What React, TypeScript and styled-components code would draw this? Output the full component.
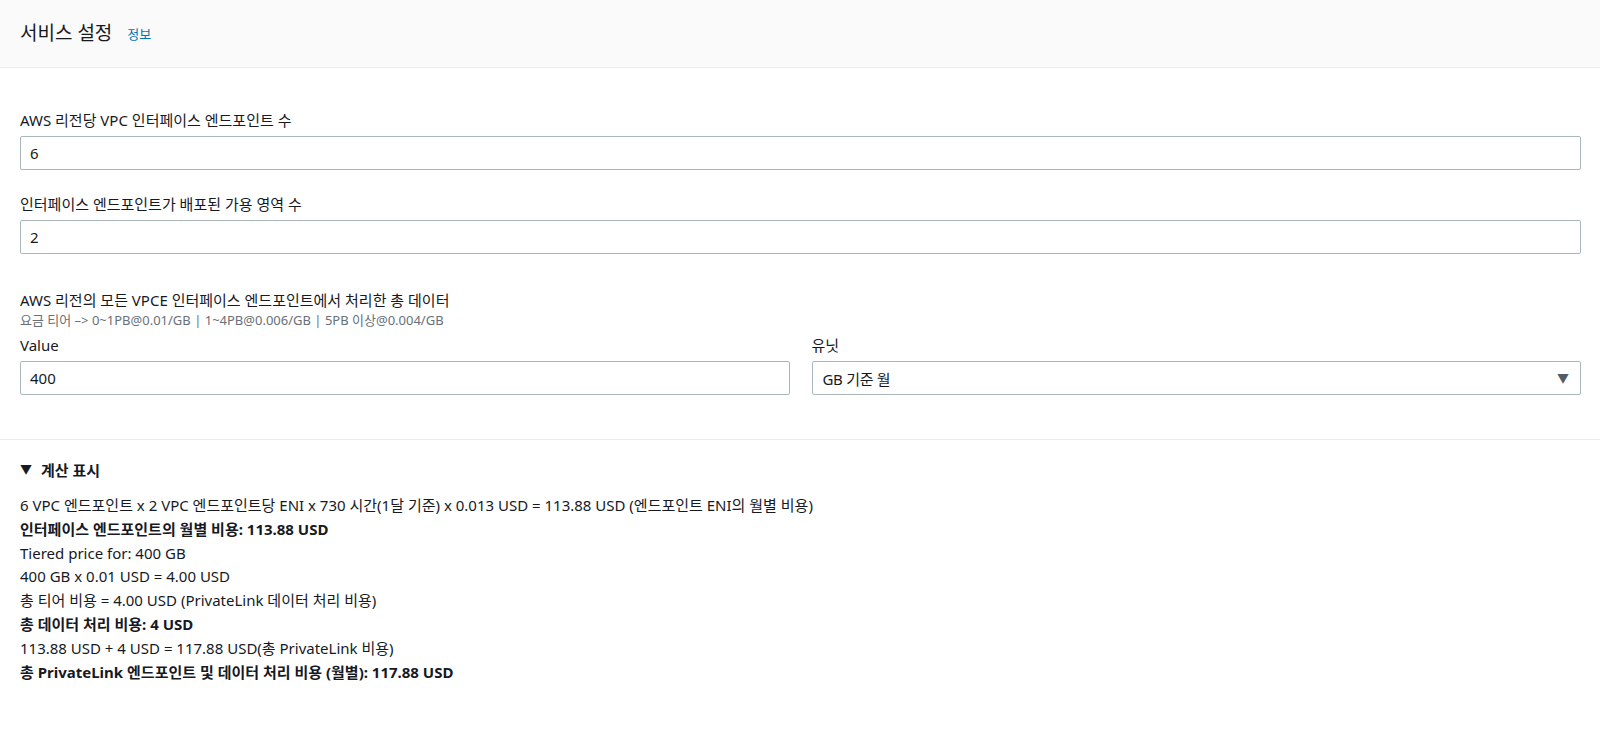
import React from 'react'
import styled, { createGlobalStyle } from 'styled-components'

const GlobalStyle = createGlobalStyle`
  html, body {
    margin: 0;
    padding: 0;
    background: #fff;
  }
  body {
    font-family: "Noto Sans", "Noto Sans CJK KR", sans-serif;
    color: #16191f;
    font-size: 15px;
  }
`

export default function App() {
  return (
    <Page>
      <GlobalStyle />
      <Header>
        <Title>서비스 설정</Title>
        <InfoLink href='#'>정보</InfoLink>
      </Header>
      <Body>
        <Field>
          <Label>AWS 리전당 VPC 인터페이스 엔드포인트 수</Label>
          <Input defaultValue='6' />
        </Field>
        <Field>
          <Label>인터페이스 엔드포인트가 배포된 가용 영역 수</Label>
          <Input defaultValue='2' />
        </Field>
        <Group>
          <Label>AWS 리전의 모든 VPCE 인터페이스 엔드포인트에서 처리한 총 데이터</Label>
          <Hint>요금 티어 –&gt; 0~1PB@0.01/GB | 1~4PB@0.006/GB | 5PB 이상@0.004/GB</Hint>
          <Columns>
            <Field>
              <Label>Value</Label>
              <Input defaultValue='400' />
            </Field>
            <Field>
              <Label>유닛</Label>
              <Select>
                <SelectText>GB 기준 월</SelectText>
                <Caret>▼</Caret>
              </Select>
            </Field>
          </Columns>
        </Group>
      </Body>
      <Calc>
        <Toggle>
          <Caret>▼</Caret>계산 표시
        </Toggle>
        <Lines>
          <Line>6 VPC 엔드포인트 x 2 VPC 엔드포인트당 ENI x 730 시간(1달 기준) x 0.013 USD = 113.88 USD (엔드포인트 ENI의 월별 비용)</Line>
          <Line $bold>인터페이스 엔드포인트의 월별 비용: 113.88 USD</Line>
          <Line>Tiered price for: 400 GB</Line>
          <Line>400 GB x 0.01 USD = 4.00 USD</Line>
          <Line>총 티어 비용 = 4.00 USD (PrivateLink 데이터 처리 비용)</Line>
          <Line $bold>총 데이터 처리 비용: 4 USD</Line>
          <Line>113.88 USD + 4 USD = 117.88 USD(총 PrivateLink 비용)</Line>
          <Line $bold>총 PrivateLink 엔드포인트 및 데이터 처리 비용 (월별): 117.88 USD</Line>
        </Lines>
      </Calc>
    </Page>
  )
}

const Page = styled.div`
  width: 100%;
  min-height: 729px;
  background: #fff;
`

const Header = styled.div`
  height: 68px;
  background: #fafafa;
  border-bottom: 1px solid #eaeded;
  display: flex;
  align-items: center;
  gap: 15px;
  padding: 0 20px 3px;
  box-sizing: border-box;
`

const Title = styled.h2`
  margin: 0;
  font-size: 19px;
  font-weight: 400;
  color: #16191f;
`

const InfoLink = styled.a`
  font-size: 13px;
  color: #0073bb;
  text-decoration: none;
  margin-top: 2px;
`

const Body = styled.div`
  padding: 41px 19px 44px 20px;
  display: flex;
  flex-direction: column;
  gap: 23px;
  border-bottom: 1px solid #eaeded;
`

const Field = styled.div`
  display: flex;
  flex-direction: column;
  gap: 5px;
  min-width: 0;
`

const Group = styled.div`
  display: flex;
  flex-direction: column;
  margin-top: 12px;
`

const Label = styled.div`
  font-size: 15px;
  line-height: 22px;
  color: #16191f;
`

const Hint = styled.div`
  font-size: 13px;
  line-height: 18px;
  color: #687078;
  margin-bottom: 5px;
`

const Columns = styled.div`
  display: grid;
  grid-template-columns: 1fr 1fr;
  gap: 22px;
`

const Input = styled.input`
  height: 34px;
  box-sizing: border-box;
  border: 1px solid #aab7b8;
  border-radius: 2px;
  padding: 0 9px;
  font-family: inherit;
  font-size: 15px;
  color: #16191f;
  outline: none;
  width: 100%;
`

const Select = styled.div`
  height: 34px;
  box-sizing: border-box;
  border: 1px solid #aab7b8;
  border-radius: 2px;
  padding: 0 11px 0 10px;
  display: flex;
  align-items: center;
  justify-content: space-between;
  color: #16191f;
`

const SelectText = styled.span`
  font-size: 15px;
  letter-spacing: -0.3px;
`

const Caret = styled.span`
  font-size: 12px;
  color: #545b64;
`

const Calc = styled.div`
  padding: 19px 20px 30px;
`

const Toggle = styled.div`
  display: flex;
  align-items: center;
  gap: 9px;
  font-weight: 700;
  font-size: 15px;
  line-height: 22px;
  ${Caret} {
    color: #16191f;
    font-size: 12px;
  }
`

const Lines = styled.div`
  margin-top: 13px;
`

const Line = styled.div<{ $bold?: boolean }>`
  font-size: 15px;
  line-height: 23.8px;
  font-weight: ${p => (p.$bold ? 700 : 400)};
  color: #16191f;
`
